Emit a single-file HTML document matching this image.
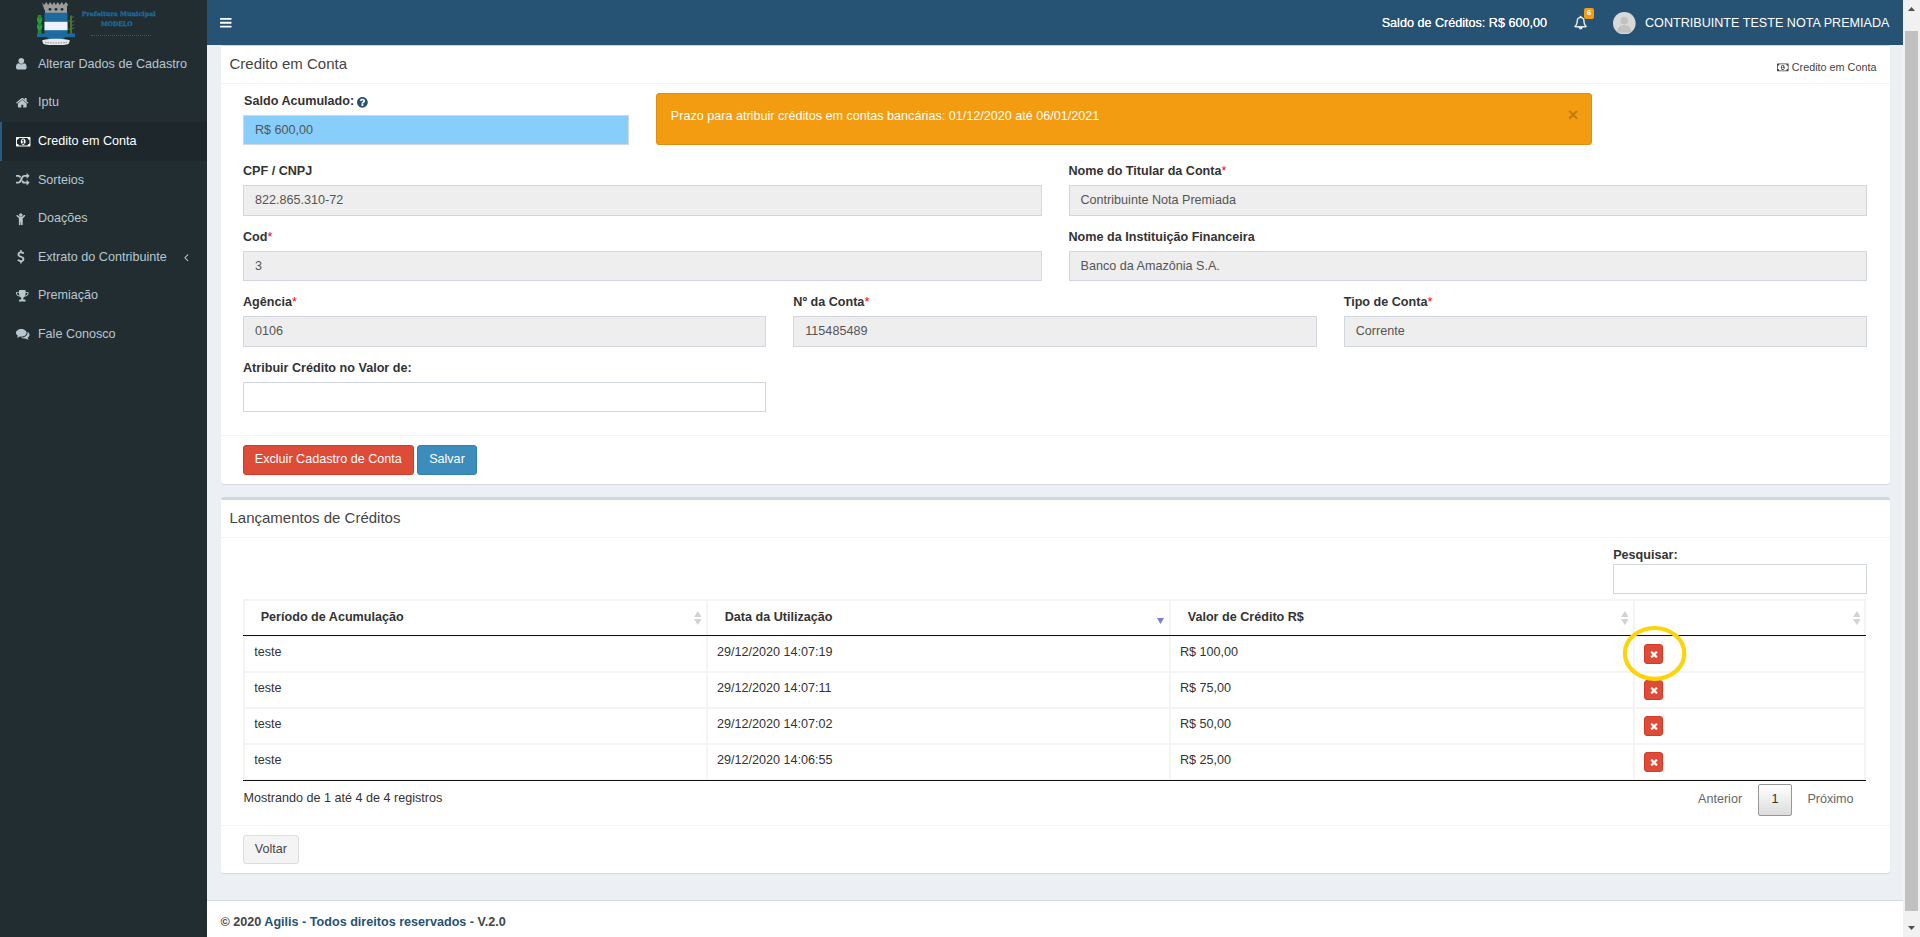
<!DOCTYPE html><html lang="pt-br"><head><meta charset="utf-8"><title>Credito em Conta</title><style>
*{box-sizing:border-box}
html,body{margin:0;padding:0}
body{width:1920px;height:937px;overflow:hidden;position:relative;background:#ecf0f5;
 font-family:"Liberation Sans",Arial,sans-serif;font-size:12.6px;line-height:18px;color:#333}
.abs,.ic{position:absolute}
.ic{display:block;overflow:visible}
#side{position:absolute;left:0;top:0;width:207px;height:937px;background:#222d32}
#hdr{position:absolute;left:207px;top:0;width:1696px;height:45px;background:#265373;color:#fff;z-index:5}
#side ul{list-style:none;margin:0;padding:0}
#side li{position:absolute;left:0;width:207px;color:#b8c7ce}
#side li span{position:absolute;left:37.9px;line-height:18px;white-space:nowrap}
#side li.act{background:#1e282c;color:#fff;border-left:2px solid #2c5a7e}
#side li.act span{left:35.9px}
.box{position:absolute;left:221px;width:1669px;background:#fff;border-top:3px solid #d2d6de;border-radius:3px;box-shadow:0 1px 1px rgba(0,0,0,.1)}
.btitle{position:absolute;left:8.5px;font-size:15px;line-height:18px;color:#444;white-space:nowrap;margin:0;font-weight:400}
.hline{position:absolute;left:0;width:100%;height:1px;background:#f4f4f4}
.lbl{position:absolute;font-weight:700;line-height:18px;white-space:nowrap;color:#333}
.lbl i{color:#f00;font-style:normal;font-weight:400}
.inp{position:absolute;border:1px solid #d2d6de;background:#eee;color:#555;padding:5px 11px;line-height:18px;white-space:nowrap}
.btn{position:absolute;border:1px solid;border-radius:3px;line-height:18px;white-space:nowrap;color:#fff;text-align:center}
.td,.th{position:absolute;line-height:18px;white-space:nowrap;color:#333}
.th{font-weight:700}
.vl{position:absolute;width:1px;background:#f1f1f1}
.hl{position:absolute;height:1px;background:#f1f1f1}
.bl{position:absolute;height:1px;background:#111}
.xb{position:absolute;width:19.4px;height:20px;background:#dd4b39;border:1px solid #d73925;border-radius:3px}
</style></head><body>
<aside id="side">
<div class="abs" id="logo" style="left:0;top:0;width:207px;height:45px">
<svg class="abs" style="left:36px;top:1px;width:40px;height:44px" viewBox="0 0 40 44">
 <g fill="#9c9c9c"><path d="M6 1.500l2.200 2.500 2-3 2 3 2-3 2 3 1.800-3 1.800 3 2-3 2 3 2-3 2 3 2-3 2.200 2.500-2.500 5.500H8.500z"/><rect x="9" y="6" width="22" height="6.500" rx="1"/></g>
 <g fill="#222d32"><circle cx="14" cy="8.300" r="1.400"/><circle cx="20" cy="8.300" r="1.400"/><circle cx="26" cy="8.300" r="1.400"/></g>
 <g><path d="M1.800 14h3.600v19h-3.600z" fill="#1f8a2e"/><path d="M1 16l2.600 3 2.600-3v4l-2.600 3-2.600-3zM1 23l2.600 3 2.600-3v4l-2.600 3-2.600-3z" fill="#27a03a"/></g>
 <g><path d="M35 14.500v19" stroke="#8a9a2a" stroke-width="1.100"/><path d="M35 18l2.800-3M35 22l-2.800-3M35 26l2.800-3M35 30l-2.800-3M35 21l3.300-1M35 28l3.300-1" stroke="#2f8a2f" stroke-width="0.900" fill="none"/></g>
 <path d="M1 32.500h38v3.600H1z" fill="#1c6a9e"/>
 <path d="M8.500 11.800h23v18.500c0 6.500-6 9.800-11.500 10.800C14.500 40.100 8.500 36.800 8.500 30.300z" fill="#1c6a9e"/>
 <path d="M8.500 20.800h23v8.400h-23z" fill="#eef2ff"/>
 <path d="M6 39.500c4-2.500 24-2.500 28 0l-1.500 3.500c-5 1.800-20 1.800-25 0z" fill="#e8e8e8"/>
 <path d="M9 41.300c5 1 17 1 22 0" stroke="#8a8a8a" stroke-width="1" stroke-dasharray="1.600 1" fill="none"/>
</svg>
<div class="abs" style="left:78.700px;top:9.300px;width:80px;text-align:center;font-family:'DejaVu Serif','Liberation Serif',serif;font-weight:700;font-size:6.300px;line-height:9px;color:#1a6a9d;-webkit-text-stroke:.3px #1a6a9d;white-space:nowrap">Prefeitura Municipal</div>
<div class="abs" style="left:78.700px;top:18.900px;width:76px;text-align:center;font-family:'DejaVu Serif','Liberation Serif',serif;font-weight:700;font-size:6.100px;line-height:9px;color:#1a6a9d;-webkit-text-stroke:.3px #1a6a9d;white-space:nowrap">MODELO</div>
<div class="abs" style="left:90.500px;top:34.600px;width:60.500px;height:0;border-top:1.600px dotted #1b6797;opacity:.9"></div>
</div>
<ul>
<li style="top:45px;height:38.57px"><svg class="ic" style="left:16.2px;top:12.43px;width:10.61px;height:13.5px;" viewBox="0 0 1408 1792"><path fill="#b8c7ce" d="M1408 1405q0 120-73 189.500t-194 69.500h-874q-121 0-194-69.500t-73-189.500q0-53 3.500-103.500t14-109 26.500-108.500 43-97.500 62-81 85.500-53.500 111.500-20q9 0 42 21.500t74.500 48 108 48 133.500 21.500 133.500-21.500 108-48 74.500-48 42-21.500q61 0 111.500 20t85.500 53.500 62 81 43 97.500 26.500 108.500 14 109 3.500 103.500zm-320-893q0 159-112.500 271.500t-271.500 112.500-271.500-112.500-112.500-271.500 112.500-271.500 271.500-112.500 271.500 112.500 112.500 271.500z"/></svg><span style="top:9.88px">Alterar Dados de Cadastro</span></li>
<li style="top:83.57px;height:38.57px"><svg class="ic" style="left:16.2px;top:12.43px;width:12.54px;height:13.5px;" viewBox="0 0 1664 1792"><path fill="#b8c7ce" d="M1408 992C1408 990 1408 988 1407 986L832 512L257 986C257 988 256 990 256 992V1472C256 1507 285 1536 320 1536H704V1152H960V1536H1344C1379 1536 1408 1507 1408 1472ZM1631 923C1642 910 1640 889 1627 878L1408 696V288C1408 270 1394 256 1376 256H1184C1166 256 1152 270 1152 288V483L908 279C866 244 798 244 756 279L37 878C24 889 22 910 33 923L95 997C100 1003 108 1007 116 1008C125 1009 133 1006 140 1001L832 424L1524 1001C1530 1006 1537 1008 1545 1008C1546 1008 1547 1008 1548 1008C1556 1007 1564 1003 1569 997L1631 923Z"/></svg><span style="top:9.88px">Iptu</span></li>
<li class=act style="top:122.14px;height:38.57px"><svg class="ic" style="left:14.2px;top:12.43px;width:14.46px;height:13.5px;" viewBox="0 0 1920 1792"><path fill="#fff" d="M768 1152V1056H896V768H894C878 793 863 804 839 825L762 745L910 608H1024V1056H1152V1152ZM1280 896C1280 714 1170 480 960 480C750 480 640 714 640 896C640 1078 750 1312 960 1312C1170 1312 1280 1078 1280 896ZM1792 1152C1651 1152 1536 1267 1536 1408H384C384 1267 269 1152 128 1152V640C269 640 384 525 384 384H1536C1536 525 1651 640 1792 640V1152ZM1920 320C1920 285 1891 256 1856 256H64C29 256 0 285 0 320V1472C0 1507 29 1536 64 1536H1856C1891 1536 1920 1507 1920 1472Z"/></svg><span style="top:9.88px">Credito em Conta</span></li>
<li style="top:160.71px;height:38.57px"><svg class="ic" style="left:16.2px;top:12.43px;width:13.5px;height:13.5px;" viewBox="0 0 1792 1792"><path fill="#b8c7ce" d="M666 481C565 339 434 256 256 256H32C14 256 0 270 0 288V480C0 498 14 512 32 512H256C407 512 471 633 529 754C569 660 610 567 666 481ZM1792 1280C1792 1272 1789 1263 1783 1257L1464 938C1457 932 1449 928 1440 928C1422 928 1408 942 1408 960V1152H1152C1001 1152 937 1031 879 910C839 1004 798 1097 743 1183C928 1443 1111 1408 1408 1408V1600C1408 1617 1423 1632 1440 1632C1448 1632 1457 1629 1463 1623L1783 1303C1789 1297 1792 1288 1792 1280ZM1792 384C1792 376 1789 367 1783 361L1464 42C1457 36 1449 32 1440 32C1422 32 1408 46 1408 64V256H1152C827 256 697 524 586 782C562 839 537 897 508 953C452 1061 389 1152 256 1152H32C14 1152 0 1166 0 1184V1376C0 1394 14 1408 32 1408H256C581 1408 711 1140 822 882C846 825 871 767 900 711C956 603 1019 512 1152 512H1408V704C1408 722 1423 736 1440 736C1448 736 1457 733 1463 727L1783 407C1789 401 1792 392 1792 384Z"/></svg><span style="top:9.88px">Sorteios</span></li>
<li style="top:199.28px;height:38.57px"><svg class="ic" style="left:16.2px;top:12.43px;width:9.64px;height:13.5px;" viewBox="0 0 1280 1792"><path fill="#b8c7ce" d="M1188 548C1225 510 1225 450 1188 412C1150 375 1090 375 1052 412L824 640H456L228 412C190 375 130 375 92 412C55 450 55 510 92 548L384 840V1664C384 1726 434 1776 496 1776C558 1776 608 1726 608 1664V1280H672V1664C672 1726 722 1776 784 1776C846 1776 896 1726 896 1664V840L1188 548ZM864 384C864 260 764 160 640 160C516 160 416 260 416 384C416 508 516 608 640 608C764 608 864 508 864 384Z"/></svg><span style="top:9.88px">Doações</span></li>
<li style="top:237.85px;height:38.57px"><svg class="ic" style="left:16.6px;top:12.43px;width:7.71px;height:13.5px;" viewBox="0 0 1024 1792"><path fill="#b8c7ce" d="M978 1185C978 944 770 863 586 792C444 737 322 690 322 584C322 493 410 430 537 430C687 430 808 537 809 538C817 544 826 547 836 545C846 544 854 538 859 529L940 383C947 371 945 356 935 345C931 341 823 231 620 208V32C620 14 606 0 588 0H453C436 0 421 14 421 32V212C212 252 68 404 68 588C68 839 292 929 472 1000C607 1054 725 1101 725 1197C725 1310 619 1362 521 1362C344 1362 204 1228 202 1227C196 1220 187 1217 178 1218C169 1219 160 1223 155 1230L52 1365C43 1377 44 1394 54 1406C59 1412 187 1552 421 1585V1760C421 1778 436 1792 453 1792H588C606 1792 620 1778 620 1760V1585C832 1550 978 1389 978 1185Z"/></svg><span style="top:9.88px">Extrato do Contribuinte</span><svg class="ic" style="left:184.2px;top:12.88px;width:4.5px;height:12.6px;" viewBox="0 0 640 1792"><path fill="#b8c7ce" d="M627 544C627 535 623 527 617 521L567 471C561 465 552 461 544 461C536 461 527 465 521 471L55 937C49 943 45 952 45 960C45 968 49 977 55 983L521 1449C527 1455 536 1459 544 1459C552 1459 561 1455 567 1449L617 1399C623 1393 627 1384 627 1376C627 1368 623 1359 617 1353L224 960L617 567C623 561 627 552 627 544Z"/></svg></li>
<li style="top:276.42px;height:38.57px"><svg class="ic" style="left:16.2px;top:12.43px;width:12.54px;height:13.5px;" viewBox="0 0 1664 1792"><path fill="#b8c7ce" d="M458 883C261 842 128 706 128 608V512H384C384 669 416 791 458 883ZM1536 608C1536 706 1403 842 1206 883C1248 791 1280 669 1280 512H1536V608ZM1664 480C1664 427 1621 384 1568 384H1280V288C1280 200 1208 128 1120 128H544C456 128 384 200 384 288V384H96C43 384 0 427 0 480V608C0 798 230 1008 542 1023C582 1074 619 1104 637 1118C690 1166 704 1216 704 1280C704 1344 672 1408 576 1408C480 1408 384 1472 384 1568V1632C384 1650 398 1664 416 1664H1248C1266 1664 1280 1650 1280 1632V1568C1280 1472 1184 1408 1088 1408C992 1408 960 1344 960 1280C960 1216 974 1166 1027 1118C1045 1104 1082 1074 1122 1023C1434 1008 1664 798 1664 608Z"/></svg><span style="top:9.88px">Premiação</span></li>
<li style="top:314.99px;height:38.57px"><svg class="ic" style="left:16.2px;top:12.43px;width:13.5px;height:13.5px;" viewBox="0 0 1792 1792"><path fill="#b8c7ce" d="M1408 768C1408 485 1093 256 704 256C315 256 0 485 0 768C0 930 104 1075 266 1169C232 1252 188 1291 149 1335C138 1348 125 1360 129 1379C129 1379 129 1379 129 1379C132 1396 146 1408 161 1408C162 1408 163 1408 164 1408C194 1404 223 1399 250 1392C351 1366 445 1323 528 1264C584 1274 643 1280 704 1280C1093 1280 1408 1051 1408 768ZM1792 1024C1792 857 1682 709 1513 616C1528 665 1536 716 1536 768C1536 947 1444 1112 1277 1234C1122 1346 919 1408 704 1408C675 1408 645 1406 616 1404C741 1486 907 1536 1088 1536C1149 1536 1208 1530 1264 1520C1347 1579 1441 1622 1542 1648C1569 1655 1598 1660 1628 1664C1644 1666 1659 1653 1663 1635C1663 1635 1663 1635 1663 1635C1667 1616 1654 1604 1643 1591C1604 1547 1560 1508 1526 1425C1688 1331 1792 1187 1792 1024Z"/></svg><span style="top:9.88px">Fale Conosco</span></li>
</ul></aside>
<header id="hdr">
<svg class="ic" style="left:12.6px;top:16.05px;width:11.57px;height:13.5px;" viewBox="0 0 1536 1792"><path fill="#fff" d="M1536 1344C1536 1309 1507 1280 1472 1280H64C29 1280 0 1309 0 1344V1472C0 1507 29 1536 64 1536H1472C1507 1536 1536 1507 1536 1472ZM1536 832C1536 797 1507 768 1472 768H64C29 768 0 797 0 832V960C0 995 29 1024 64 1024H1472C1507 1024 1536 995 1536 960ZM1536 320C1536 285 1507 256 1472 256H64C29 256 0 285 0 320V448C0 483 29 512 64 512H1472C1507 512 1536 483 1536 448Z"/></svg>
<div class="abs" style="left:1174.700px;top:13.500px;white-space:nowrap;text-shadow:0 0 .4px #fff">Saldo de Créditos: R$ 600,00</div>
<svg class="ic" style="left:1366.6px;top:16px;width:13.2px;height:13.2px;stroke:#fff;stroke-width:45" viewBox="0 0 1792 1792"><path fill="#fff" d="M912 1696C912 1705 905 1712 896 1712C799 1712 720 1633 720 1536C720 1527 727 1520 736 1520C745 1520 752 1527 752 1536C752 1615 817 1680 896 1680C905 1680 912 1687 912 1696ZM246 1408C425 1206 512 932 512 576C512 447 634 256 896 256C1158 256 1280 447 1280 576C1280 932 1367 1206 1546 1408ZM1728 1408C1580 1283 1408 1059 1408 576C1408 384 1249 174 984 135C989 123 992 110 992 96C992 43 949 0 896 0C843 0 800 43 800 96C800 110 803 123 808 135C543 174 384 384 384 576C384 1059 212 1283 64 1408C64 1478 122 1536 192 1536H640C640 1677 755 1792 896 1792C1037 1792 1152 1677 1152 1536H1600C1670 1536 1728 1478 1728 1408Z"/></svg>
<div class="abs" style="left:1377px;top:8.300px;width:10.200px;height:10.700px;background:#f39c12;border-radius:2px;color:#fff;font-size:8.100px;font-weight:700;line-height:10.700px;text-align:center">6</div>
<svg class="abs" style="left:1406.200px;top:11.600px;width:22.600px;height:22.600px" viewBox="0 0 50 50"><defs><clipPath id="av"><circle cx="25" cy="25" r="25"/></clipPath></defs><circle cx="25" cy="25" r="25" fill="#d9d9d9"/><g clip-path="url(#av)" fill="#c2c2c2"><circle cx="25" cy="19" r="8.500"/><path d="M9 46c0-11 6-17 16-17s16 6 16 17z"/></g></svg>
<div class="abs" style="left:1438px;top:13.500px;white-space:nowrap">CONTRIBUINTE TESTE NOTA PREMIADA</div>
</header>
<section class="box" style="top:43px;height:441px">
<h3 class="btitle" style="top:8.6px">Credito em Conta</h3>
<svg class="ic" style="left:1556.2px;top:15.5px;width:11.57px;height:10.8px;" viewBox="0 0 1920 1792"><path fill="#444" d="M768 1152V1056H896V768H894C878 793 863 804 839 825L762 745L910 608H1024V1056H1152V1152ZM1280 896C1280 714 1170 480 960 480C750 480 640 714 640 896C640 1078 750 1312 960 1312C1170 1312 1280 1078 1280 896ZM1792 1152C1651 1152 1536 1267 1536 1408H384C384 1267 269 1152 128 1152V640C269 640 384 525 384 384H1536C1536 525 1651 640 1792 640V1152ZM1920 320C1920 285 1891 256 1856 256H64C29 256 0 285 0 320V1472C0 1507 29 1536 64 1536H1856C1891 1536 1920 1507 1920 1472Z"/></svg>
<div class="abs" style="left:1570.8px;top:12px;font-size:10.800px;color:#444;white-space:nowrap">Credito em Conta</div>
<div class="hline" style="top:37.3px"></div>
<div class="lbl" style="left:23.1px;top:46px">Saldo Acumulado:</div>
<svg class="ic" style="left:136px;top:50px;width:10.8px;height:12.6px;" viewBox="0 0 1536 1792"><path fill="#265373" d="M896 1376C896 1394 882 1408 864 1408H672C654 1408 640 1394 640 1376V1184C640 1166 654 1152 672 1152H864C882 1152 896 1166 896 1184V1376ZM1152 704C1152 856 1048 914 972 957C925 984 896 1033 896 1056C896 1074 882 1088 864 1088H672C654 1088 640 1074 640 1056V1020C640 923 737 840 808 808C869 780 896 754 896 702C896 658 837 617 773 617C737 617 704 629 687 641C668 655 648 673 601 733C595 741 585 745 576 745C569 745 562 743 557 739L425 639C412 629 408 611 417 597C503 454 625 384 788 384C960 384 1152 521 1152 704ZM1536 896C1536 472 1192 128 768 128C344 128 0 472 0 896C0 1320 344 1664 768 1664C1192 1664 1536 1320 1536 896Z"/></svg>
<div class="inp" style="left:22px;top:69px;width:386px;height:30px;background:#87cefa;padding:5px 11px">R$ 600,00</div>
<div class="abs" style="left:435px;top:47px;width:936px;height:52px;background:#f39c12;border:1px solid #e08e0b;border-radius:3px;color:#fff;padding:13px 13.800px;white-space:nowrap">Prazo para atribuir créditos em contas bancárias: 01/12/2020 até 06/01/2021<span class="abs" style="right:12.500px;top:12px;font-size:18.900px;line-height:18.900px;font-weight:700;color:#000;opacity:.2">×</span></div>
<div class="lbl" style="left:22px;top:116px">CPF / CNPJ</div>
<div class="inp" style="left:22px;top:139px;width:798.5px;height:31px;background:#eee">822.865.310-72</div>
<div class="lbl" style="left:847.5px;top:116px">Nome do Titular da Conta<i>*</i></div>
<div class="inp" style="left:847.5px;top:139px;width:798.5px;height:31px;background:#eee">Contribuinte Nota Premiada</div>
<div class="lbl" style="left:22px;top:182px">Cod<i>*</i></div>
<div class="inp" style="left:22px;top:205px;width:798.5px;height:30px;background:#eee">3</div>
<div class="lbl" style="left:847.5px;top:182px">Nome da Instituição Financeira</div>
<div class="inp" style="left:847.5px;top:205px;width:798.5px;height:30px;background:#eee">Banco da Amazônia S.A.</div>
<div class="lbl" style="left:22px;top:247px">Agência<i>*</i></div>
<div class="inp" style="left:22px;top:270px;width:523.3px;height:31px;background:#eee">0106</div>
<div class="lbl" style="left:572.3px;top:247px">Nº da Conta<i>*</i></div>
<div class="inp" style="left:572.3px;top:270px;width:523.3px;height:31px;background:#eee">115485489</div>
<div class="lbl" style="left:1122.7px;top:247px">Tipo de Conta<i>*</i></div>
<div class="inp" style="left:1122.7px;top:270px;width:523.3px;height:31px;background:#eee">Corrente</div>
<div class="lbl" style="left:22px;top:313px">Atribuir Crédito no Valor de:</div>
<div class="inp" style="left:22px;top:336px;width:523.3px;height:30px;background:#fff"></div>
<div class="hline" style="top:389px"></div>
<div class="btn" style="left:22px;top:399px;width:170.600px;height:30px;padding:4px 0;background:#dd4b39;border-color:#d73925">Excluir Cadastro de Conta</div>
<div class="btn" style="left:195.9px;top:399px;width:60.200px;height:30px;padding:4px 0;background:#3c8dbc;border-color:#367fa9">Salvar</div>
</section>
<section class="box" style="top:497px;height:376px">
<h3 class="btitle" style="top:8.5px">Lançamentos de Créditos</h3>
<div class="hline" style="top:37px"></div>
<div class="lbl" style="left:1392.2px;top:45.6px">Pesquisar:</div>
<div class="inp" style="left:1392px;top:64px;width:254px;height:30px;background:#fff"></div>
<div class="abs" style="left:22px;top:99px;width:1623px;height:1.6px;background:#f4f4f4"></div>
<div class="abs" style="left:22px;top:136px;width:1623px;height:1px;background:#f4f4f4"></div>
<div class="abs" style="left:22px;top:171px;width:1623px;height:2px;background:#f4f4f4"></div>
<div class="abs" style="left:22px;top:207px;width:1623px;height:2px;background:#f4f4f4"></div>
<div class="abs" style="left:22px;top:243px;width:1623px;height:2px;background:#f4f4f4"></div>
<div class="abs" style="left:22px;top:279px;width:1623px;height:1px;background:#f4f4f4"></div>
<div class="abs" style="left:22px;top:99px;width:1.8px;height:181px;background:#f4f4f4"></div>
<div class="abs" style="left:1643.2px;top:99px;width:1.8px;height:181px;background:#f4f4f4"></div>
<div class="abs" style="left:485px;top:99px;width:2px;height:181px;background:#f4f4f4"></div>
<div class="abs" style="left:948.3px;top:99px;width:2px;height:181px;background:#f4f4f4"></div>
<div class="abs" style="left:1412px;top:99px;width:2px;height:181px;background:#f4f4f4"></div>
<div class="abs" style="left:22px;top:135px;width:1623px;height:1px;background:#111"></div>
<div class="abs" style="left:22px;top:280px;width:1623px;height:1px;background:#111"></div>
<div class="th" style="left:39.7px;top:108.3px">Período de Acumulação</div>
<svg class="abs" style="left:472.6px;top:111.1px;width:7.600px;height:14px" viewBox="0 0 7.600 14"><path d="M0 6L3.800 0l3.800 6zM0 8l3.800 6 3.800-6z" fill="#d3d3d3"/></svg>
<div class="th" style="left:503.7px;top:108.3px">Data da Utilização</div>
<svg class="abs" style="left:936.4px;top:118.2px;width:7px;height:6px" viewBox="0 0 7 6"><path d="M0 0h7L3.500 6z" fill="#7c7ce0"/></svg>
<div class="th" style="left:966.7px;top:108.3px">Valor de Crédito R$</div>
<svg class="abs" style="left:1399.6px;top:111.1px;width:7.600px;height:14px" viewBox="0 0 7.600 14"><path d="M0 6L3.800 0l3.800 6zM0 8l3.800 6 3.800-6z" fill="#d3d3d3"/></svg>
<svg class="abs" style="left:1631.6px;top:111.1px;width:7.600px;height:14px" viewBox="0 0 7.600 14"><path d="M0 6L3.800 0l3.800 6zM0 8l3.800 6 3.800-6z" fill="#d3d3d3"/></svg>
<div class="td" style="left:33.2px;top:143px">teste</div>
<div class="td" style="left:496px;top:143px">29/12/2020 14:07:19</div>
<div class="td" style="left:959px;top:143px">R$ 100,00</div>
<div class="xb" style="left:1422.9px;top:144.4px"><svg class="ic" style="left:4.9px;top:3.8px;width:8.17px;height:10.4px;" viewBox="0 0 1408 1792"><path fill="#fff" d="M1298 1322C1298 1297 1288 1272 1270 1254L976 960L1270 666C1288 648 1298 623 1298 598C1298 573 1288 548 1270 530L1134 394C1116 376 1091 366 1066 366C1041 366 1016 376 998 394L704 688L410 394C392 376 367 366 342 366C317 366 292 376 274 394L138 530C120 548 110 573 110 598C110 623 120 648 138 666L432 960L138 1254C120 1272 110 1297 110 1322C110 1347 120 1372 138 1390L274 1526C292 1544 317 1554 342 1554C367 1554 392 1544 410 1526L704 1232L998 1526C1016 1544 1041 1554 1066 1554C1091 1554 1116 1544 1134 1526L1270 1390C1288 1372 1298 1347 1298 1322Z"/></svg></div>
<div class="td" style="left:33.2px;top:179px">teste</div>
<div class="td" style="left:496px;top:179px">29/12/2020 14:07:11</div>
<div class="td" style="left:959px;top:179px">R$ 75,00</div>
<div class="xb" style="left:1422.9px;top:180.4px"><svg class="ic" style="left:4.9px;top:3.8px;width:8.17px;height:10.4px;" viewBox="0 0 1408 1792"><path fill="#fff" d="M1298 1322C1298 1297 1288 1272 1270 1254L976 960L1270 666C1288 648 1298 623 1298 598C1298 573 1288 548 1270 530L1134 394C1116 376 1091 366 1066 366C1041 366 1016 376 998 394L704 688L410 394C392 376 367 366 342 366C317 366 292 376 274 394L138 530C120 548 110 573 110 598C110 623 120 648 138 666L432 960L138 1254C120 1272 110 1297 110 1322C110 1347 120 1372 138 1390L274 1526C292 1544 317 1554 342 1554C367 1554 392 1544 410 1526L704 1232L998 1526C1016 1544 1041 1554 1066 1554C1091 1554 1116 1544 1134 1526L1270 1390C1288 1372 1298 1347 1298 1322Z"/></svg></div>
<div class="td" style="left:33.2px;top:215px">teste</div>
<div class="td" style="left:496px;top:215px">29/12/2020 14:07:02</div>
<div class="td" style="left:959px;top:215px">R$ 50,00</div>
<div class="xb" style="left:1422.9px;top:216.4px"><svg class="ic" style="left:4.9px;top:3.8px;width:8.17px;height:10.4px;" viewBox="0 0 1408 1792"><path fill="#fff" d="M1298 1322C1298 1297 1288 1272 1270 1254L976 960L1270 666C1288 648 1298 623 1298 598C1298 573 1288 548 1270 530L1134 394C1116 376 1091 366 1066 366C1041 366 1016 376 998 394L704 688L410 394C392 376 367 366 342 366C317 366 292 376 274 394L138 530C120 548 110 573 110 598C110 623 120 648 138 666L432 960L138 1254C120 1272 110 1297 110 1322C110 1347 120 1372 138 1390L274 1526C292 1544 317 1554 342 1554C367 1554 392 1544 410 1526L704 1232L998 1526C1016 1544 1041 1554 1066 1554C1091 1554 1116 1544 1134 1526L1270 1390C1288 1372 1298 1347 1298 1322Z"/></svg></div>
<div class="td" style="left:33.2px;top:251px">teste</div>
<div class="td" style="left:496px;top:251px">29/12/2020 14:06:55</div>
<div class="td" style="left:959px;top:251px">R$ 25,00</div>
<div class="xb" style="left:1422.9px;top:252.4px"><svg class="ic" style="left:4.9px;top:3.8px;width:8.17px;height:10.4px;" viewBox="0 0 1408 1792"><path fill="#fff" d="M1298 1322C1298 1297 1288 1272 1270 1254L976 960L1270 666C1288 648 1298 623 1298 598C1298 573 1288 548 1270 530L1134 394C1116 376 1091 366 1066 366C1041 366 1016 376 998 394L704 688L410 394C392 376 367 366 342 366C317 366 292 376 274 394L138 530C120 548 110 573 110 598C110 623 120 648 138 666L432 960L138 1254C120 1272 110 1297 110 1322C110 1347 120 1372 138 1390L274 1526C292 1544 317 1554 342 1554C367 1554 392 1544 410 1526L704 1232L998 1526C1016 1544 1041 1554 1066 1554C1091 1554 1116 1544 1134 1526L1270 1390C1288 1372 1298 1347 1298 1322Z"/></svg></div>
<svg class="abs" style="left:1397px;top:120px;width:74px;height:68px;overflow:visible" viewBox="1618 620 74 68"><ellipse cx="1654.600" cy="653.400" rx="29.700" ry="25.400" fill="none" stroke="#fcd40a" stroke-width="4.200"/></svg>
<div class="td" style="left:22.5px;top:288.8px">Mostrando de 1 até 4 de 4 registros</div>
<div class="td" style="left:1477px;top:289.6px;color:#666">Anterior</div>
<div class="abs" style="left:1537px;top:284px;width:34px;height:32px;border:1px solid #979797;border-radius:2px;background:linear-gradient(#fff,#dcdcdc);text-align:center;line-height:28.500px;color:#333">1</div>
<div class="td" style="left:1586.4px;top:289.6px;color:#666">Próximo</div>
<div class="hline" style="top:325px"></div>
<div class="btn" style="left:22.2px;top:335px;width:55.400px;height:29px;padding:4px 0;background:#f4f4f4;border-color:#ddd;color:#444">Voltar</div>
</section>
<footer class="abs" style="left:207px;top:900px;width:1696px;height:37px;background:#fff;border-top:1px solid #d2d6de;padding:12.300px 13.500px;font-weight:700;color:#444;white-space:nowrap">© 2020 <span style="color:#265373">Agilis - Todos direitos reservados -</span> V.2.0</footer>
<div class="abs" style="left:1903px;top:0;width:17px;height:937px;background:#f1f1f1;z-index:9">
<svg class="abs" style="left:5px;top:6.500px;width:7px;height:4px" viewBox="0 0 7 4"><path d="M0 4L3.500 0 7 4z" fill="#505050"/></svg>
<div class="abs" style="left:2px;top:30.500px;width:13px;height:880px;background:#c1c1c1"></div>
<svg class="abs" style="left:5px;top:926px;width:7px;height:4px" viewBox="0 0 7 4"><path d="M0 0L3.500 4 7 0z" fill="#505050"/></svg>
</div>
</body></html>
